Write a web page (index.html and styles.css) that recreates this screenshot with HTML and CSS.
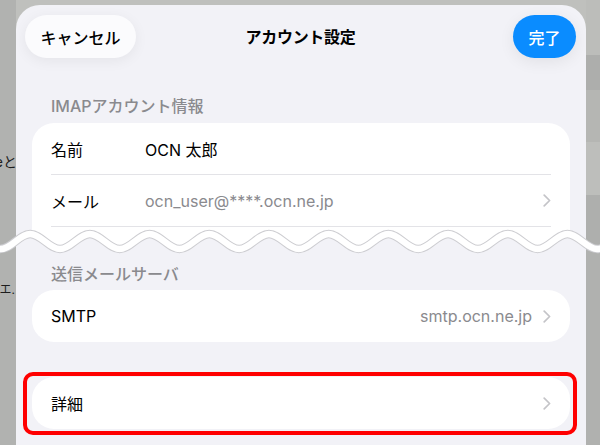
FILE: index.html
```html
<!DOCTYPE html>
<html lang="ja">
<head>
<meta charset="utf-8">
<title>アカウント設定</title>
<link rel="stylesheet" href="styles.css">
</head>
<body>
<div class="screen">
  <aside class="strip strip-left">
    <span class="peek peek-1">eと</span>
    <span class="peek peek-2">エ.</span>
  </aside>

  <main class="sheet">
    <header class="nav">
      <button class="pill cancel">キャンセル</button>
      <h1 class="title">アカウント設定</h1>
      <button class="pill done">完了</button>
    </header>

    <section class="group">
      <h2 class="group-title first">IMAPアカウント情報</h2>
      <div class="card">
        <div class="row sep"><span class="label">名前</span><span class="value">OCN 太郎</span></div>
        <div class="row sep"><span class="label">メール</span><span class="value muted">ocn_user@****.ocn.ne.jp</span>
          <svg class="chev" width="8" height="13" viewBox="0 0 8 13"><path d="M1.2 1.2 L6.6 6.5 L1.2 11.8" fill="none" stroke="#c4c4c8" stroke-width="1.7" stroke-linecap="round" stroke-linejoin="round"/></svg>
        </div>
        <div class="row-cut"></div>
      </div>
    </section>

    <section class="group">
      <h2 class="group-title">送信メールサーバ</h2>
      <div class="card">
        <div class="row"><span class="label">SMTP</span><span class="value muted right">smtp.ocn.ne.jp</span>
          <svg class="chev" width="8" height="13" viewBox="0 0 8 13"><path d="M1.2 1.2 L6.6 6.5 L1.2 11.8" fill="none" stroke="#c4c4c8" stroke-width="1.7" stroke-linecap="round" stroke-linejoin="round"/></svg>
        </div>
      </div>
    </section>

    <div class="highlight">
      <div class="card">
        <div class="row"><span class="label">詳細</span><span class="value"></span>
          <svg class="chev" width="8" height="13" viewBox="0 0 8 13"><path d="M1.2 1.2 L6.6 6.5 L1.2 11.8" fill="none" stroke="#c4c4c8" stroke-width="1.7" stroke-linecap="round" stroke-linejoin="round"/></svg>
        </div>
      </div>
    </div>
  </main>

  <aside class="strip strip-right">
    <div class="band b1"></div>
    <div class="band b2"></div>
    <div class="band b3"></div>
    <div class="band b4"></div>
    <div class="band b5"></div>
    <div class="band b6"></div>
  </aside>

  <svg class="wave" width="600" height="34" viewBox="0 0 600 34">
    <defs>
      <clipPath id="below">
        <path d="M -29.55,8 C -18.68,8 -11.02,23 0.3,23 S 19.28,8 30.15,8 S 49.13,23 60,23 S 78.98,8 89.85,8 S 108.83,23 119.7,23 S 138.68,8 149.55,8 S 168.53,23 179.4,23 S 198.38,8 209.25,8 S 228.23,23 239.1,23 S 258.08,8 268.95,8 S 287.93,23 298.8,23 S 317.78,8 328.65,8 S 347.63,23 358.5,23 S 377.48,8 388.35,8 S 407.33,23 418.2,23 S 437.18,8 448.05,8 S 467.03,23 477.9,23 S 496.88,8 507.75,8 S 526.73,23 537.6,23 S 556.58,8 567.45,8 S 586.43,23 597.3,23 S 616.28,8 627.15,8 L 627.15,34 L -29.55,34 Z"/>
      </clipPath>
    </defs>
    <g clip-path="url(#below)">
      <rect x="0" y="0" width="16" height="34" fill="#b1b2b0"/>
      <rect x="16" y="0" width="570" height="34" fill="#f2f2f7"/>
      <rect x="586" y="0" width="14" height="34" fill="#b0b1af"/>
    </g>
    <path d="M -29.55,8 C -18.68,8 -11.02,23 0.3,23 S 19.28,8 30.15,8 S 49.13,23 60,23 S 78.98,8 89.85,8 S 108.83,23 119.7,23 S 138.68,8 149.55,8 S 168.53,23 179.4,23 S 198.38,8 209.25,8 S 228.23,23 239.1,23 S 258.08,8 268.95,8 S 287.93,23 298.8,23 S 317.78,8 328.65,8 S 347.63,23 358.5,23 S 377.48,8 388.35,8 S 407.33,23 418.2,23 S 437.18,8 448.05,8 S 467.03,23 477.9,23 S 496.88,8 507.75,8 S 526.73,23 537.6,23 S 556.58,8 567.45,8 S 586.43,23 597.3,23 S 616.28,8 627.15,8" fill="none" stroke="#cdcdd1" stroke-width="8.4"/>
    <path d="M -29.55,8 C -18.68,8 -11.02,23 0.3,23 S 19.28,8 30.15,8 S 49.13,23 60,23 S 78.98,8 89.85,8 S 108.83,23 119.7,23 S 138.68,8 149.55,8 S 168.53,23 179.4,23 S 198.38,8 209.25,8 S 228.23,23 239.1,23 S 258.08,8 268.95,8 S 287.93,23 298.8,23 S 317.78,8 328.65,8 S 347.63,23 358.5,23 S 377.48,8 388.35,8 S 407.33,23 418.2,23 S 437.18,8 448.05,8 S 467.03,23 477.9,23 S 496.88,8 507.75,8 S 526.73,23 537.6,23 S 556.58,8 567.45,8 S 586.43,23 597.3,23 S 616.28,8 627.15,8" fill="none" stroke="#ffffff" stroke-width="6.4"/>
  </svg>
</div>
</body>
</html>
```

FILE: styles.css
```css
html, body {
  margin: 0;
  padding: 0;
  width: 600px;
  height: 445px;
  overflow: hidden;
  background: #bfc0bd;
  font-family: "Inter", "Noto Sans CJK JP", sans-serif;
  color: #000;
}

.screen {
  position: relative;
  display: grid;
  grid-template-columns: 16px 570px 14px;
  height: 445px;
}

/* side strips of the page behind the sheet */
.strip {
  display: flex;
  flex-direction: column;
  overflow: hidden;
}

.strip-left {
  background: #b1b2b0;
}

.peek {
  align-self: flex-end;
  white-space: nowrap;
  font-size: 14px;
  line-height: 18px;
  color: #1d1d1d;
}

.peek-1 { margin-top: 153px; margin-right: -1px; }
.peek-2 { margin-top: 110px; font-size: 12px; margin-right: 1px; }

.strip-right {
  background: #b0b1af;
}

.band { flex: none; }
.b1 { height: 55px; background: #bcbdba; }
.b2 { height: 35px; background: #adaeac; }
.b3 { height: 52px; background: #b5b6b3; }
.b4 { height: 53px; background: #bdbebb; }
.b5 { height: 55px; background: #aeafad; }
.b6 { flex: 1; background: #b0b1af; }

/* the sheet */
.sheet {
  margin-top: 5px;
  background: #f2f2f7;
  border-radius: 24px 24px 0 0;
  padding: 0 16px;
}

.nav {
  display: grid;
  grid-template-columns: 1fr auto 1fr;
  align-items: center;
  margin: 0 -6px 0 -7px;
  padding-top: 10px;
}

.pill {
  height: 43px;
  border: none;
  border-radius: 22px;
  font-family: inherit;
  font-size: 16px;
  font-weight: 500;
  padding: 0;
  display: flex;
  align-items: center;
  justify-content: center;
}

.cancel {
  justify-self: start;
  width: 111px;
  background: #fbfbfd;
  color: #000;
  box-shadow: 0 3px 14px rgba(0, 0, 0, 0.06);
}

.done {
  justify-self: end;
  width: 63px;
  background: #0a8cff;
  color: #fff;
  box-shadow: 0 4px 16px rgba(0, 0, 0, 0.07);
}

.title {
  margin: 0;
  font-size: 16px;
  font-weight: 700;
  line-height: 20px;
  letter-spacing: -0.3px;
}

.group-title {
  margin: 8px 0 7px;
  padding-left: 19px;
  font-size: 16px;
  line-height: 18px;
  font-weight: 500;
  color: #8a8a8e;
}

.group-title.first {
  margin: 39px 0 8px;
}

.card {
  background: #fff;
  border-radius: 22px;
}

.row {
  margin: 0 19px;
  height: 52px;
  display: flex;
  align-items: center;
  font-size: 16px;
}

.row.sep {
  height: 51px;
  border-bottom: 1px solid #e3e3e7;
}

.label {
  flex: none;
  width: 94px;
}

.value {
  flex: 1;
  white-space: nowrap;
}

.muted {
  color: #8a8a8e;
}

.right {
  text-align: right;
  margin-right: 11px;
}

.chev {
  flex: none;
}

.row-cut {
  height: 30px;
}

.highlight {
  margin: 30px -7px 0 -9px;
  border: 4px solid #ff0000;
  border-radius: 10px;
  padding: 1px 3px 2px 5px;
}

.wave {
  position: absolute;
  left: 0;
  top: 226px;
  display: block;
}
```
